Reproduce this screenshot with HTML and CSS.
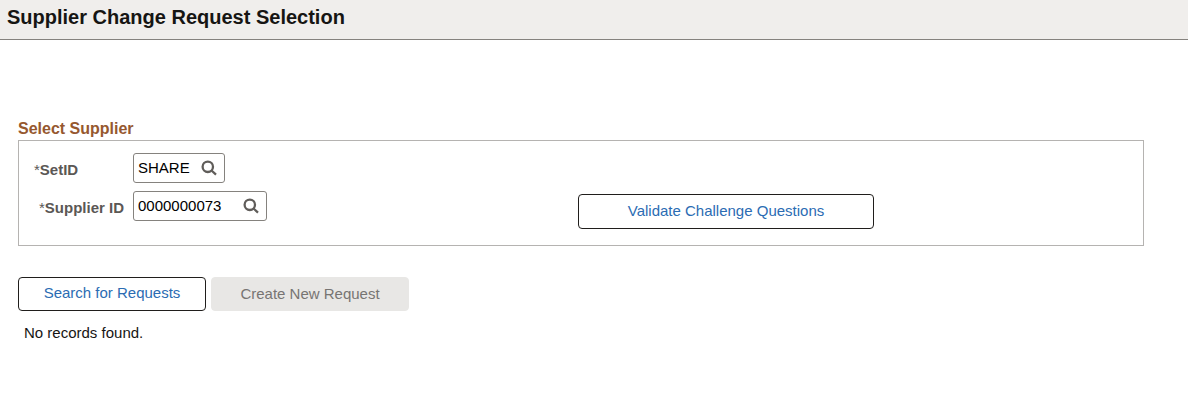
FILE: index.html
```
<!DOCTYPE html>
<html lang="en">
<head>
    <meta charset="UTF-8">
    <meta name="viewport" content="width=device-width, initial-scale=1.0">
    <title>Supplier Change Request Selection</title>
    <link rel="stylesheet" href="styles.css">
</head>
<body>
    <header class="page-header">
        <h1>Supplier Change Request Selection</h1>
    </header>

    <main class="content">
        <h2 class="section-title">Select Supplier</h2>
        <form class="panel">
            <div class="fields">
                <div class="field">
                    <label for="setId"><span class="required">*</span>SetID</label>
                    <div class="prompt prompt-short">
                        <input type="text" id="setId" value="SHARE">
                        <button type="button" class="lookup" aria-label="Look up SetID">
                            <svg width="16" height="16" viewBox="0 0 16 16"><circle cx="6.8" cy="6.8" r="5.2" /><path d="M10.5 10.5L15 14.6" /></svg>
                        </button>
                    </div>
                </div>
                <div class="field field-indent">
                    <label for="supplierId"><span class="required">*</span>Supplier ID</label>
                    <div class="prompt prompt-long">
                        <input type="text" id="supplierId" value="0000000073">
                        <button type="button" class="lookup" aria-label="Look up Supplier ID">
                            <svg width="16" height="16" viewBox="0 0 16 16"><circle cx="6.8" cy="6.8" r="5.2" /><path d="M10.5 10.5L15 14.6" /></svg>
                        </button>
                    </div>
                </div>
            </div>
            <button type="button" class="button button-validate">Validate Challenge Questions</button>
        </form>

        <div class="actions">
            <button type="button" class="button button-search">Search for Requests</button>
            <button type="button" class="button button-create" disabled>Create New Request</button>
        </div>
        <p class="message">No records found.</p>
    </main>
</body>
</html>
```

FILE: styles.css
```
* {
    box-sizing: border-box;
}

body {
    margin: 0;
    background-color: #fff;
    color: #161513;
    font-family: Arial, "Liberation Sans", sans-serif;
    font-size: 15px;
    line-height: 18px;
}

.page-header {
    padding: 5px 7px 10px;
    background-color: #f0eeec;
    border-bottom: 1px solid #85827e;
}

.page-header h1 {
    margin: 0;
    font-size: 20px;
    line-height: 24px;
}

.content {
    padding: 79px 44px 0 18px;
}

.section-title {
    margin: 0 0 2px;
    color: #96582f;
    font-size: 16px;
    line-height: 19px;
}

.panel {
    display: flex;
    align-items: flex-end;
    padding: 12px 0 16px;
    border: 1px solid #b5b3b1;
}

.fields {
    width: 559px;
    padding-bottom: 8px;
}

.field {
    display: flex;
    align-items: center;
}

.field + .field {
    margin-top: 8px;
}

.field label {
    width: 114px;
    padding: 3px 0 0 15px;
    color: #5b5855;
    font-weight: bold;
    white-space: nowrap;
}

.field-indent label {
    padding-left: 20px;
}

.required {
    font-weight: normal;
}

.prompt {
    display: flex;
    align-items: center;
    height: 30px;
    background-color: #fff;
    border: 1px solid #85827e;
    border-radius: 3px;
}

.prompt-short {
    width: 92px;
}

.prompt-long {
    width: 134px;
}

.prompt input {
    flex: 1;
    min-width: 0;
    height: 28px;
    padding: 0 4px 2px;
    border: 0;
    outline: 0;
    background: none;
    color: #000;
    font: inherit;
}

.lookup {
    display: flex;
    padding: 0 7px 1px 0;
    border: 0;
    background: none;
    cursor: pointer;
}

.lookup svg {
    fill: none;
    stroke: #605d5a;
    stroke-width: 2.3;
}

.button {
    height: 34px;
    padding: 0 0 2px;
    border: 1px solid #201e1c;
    border-radius: 4px;
    background-color: #fff;
    color: #2b6cb3;
    font: inherit;
    cursor: pointer;
}

.button:disabled {
    padding: 0;
    border-color: #e8e7e5;
    background-color: #e8e7e5;
    color: #777573;
    cursor: default;
}

.button-validate {
    width: 296px;
    height: 35px;
}

.button-search {
    width: 188px;
}

.button-create {
    width: 198px;
}

.actions {
    display: flex;
    gap: 5px;
    margin-top: 31px;
}

.message {
    margin: 13px 0 0 6px;
}
```
